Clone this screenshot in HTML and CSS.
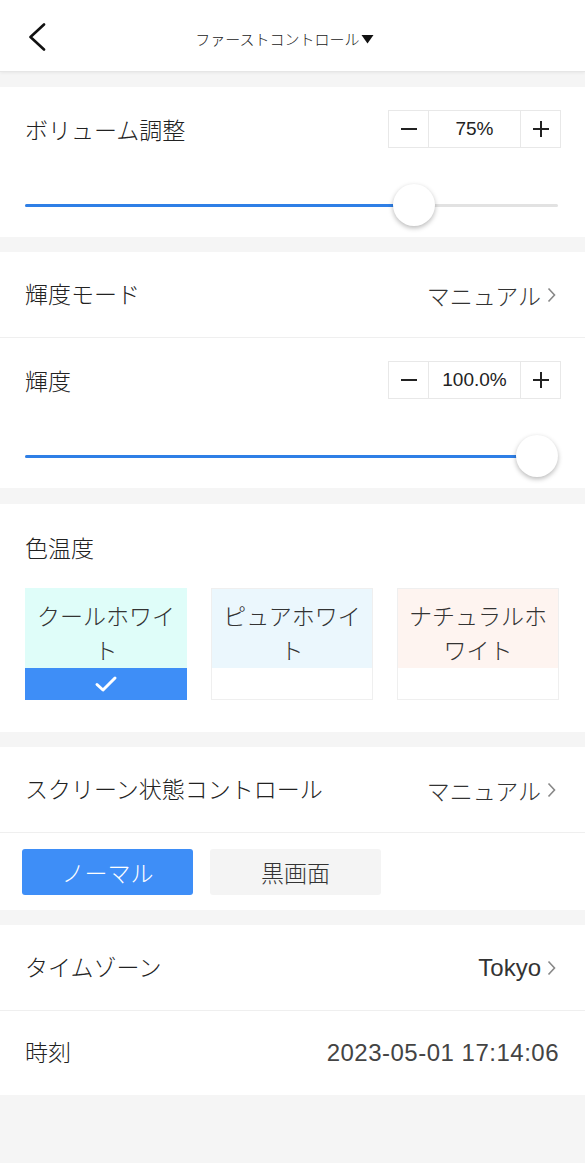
FILE: index.html
```html
<!DOCTYPE html>
<html lang="ja">
<head>
<meta charset="utf-8">
<title>ファーストコントロール</title>
<link rel="stylesheet" href="styles.css">
</head>
<body>
<header class="header">
  <div class="header-left">
    <svg class="back" width="20" height="28" viewBox="0 0 20 28"><path d="M17 1.5 L3.5 14 L17 26.5" fill="none" stroke="#111" stroke-width="2.6" stroke-linecap="round" stroke-linejoin="round"/></svg>
  </div>
  <div class="header-title">ファーストコントロール<svg class="caret" width="13" height="10" viewBox="0 0 13 10"><path d="M0.5 1 H12.5 L6.5 9.5 Z" fill="#111"/></svg></div>
  <div></div>
</header>

<section class="card-section">
  <div class="adjust">
    <div class="adjust-top">
      <span class="label">ボリューム調整</span>
      <div class="stepper">
        <span class="step-btn"><svg width="18" height="18" viewBox="0 0 18 18"><path d="M1 9 H17" stroke="#222" stroke-width="2"/></svg></span>
        <span class="step-val">75%</span>
        <span class="step-btn plus"><svg width="18" height="18" viewBox="0 0 18 18"><path d="M1 9 H17 M9 1 V17" stroke="#222" stroke-width="2"/></svg></span>
      </div>
    </div>
    <div class="slider">
      <div class="track"><div class="fill" style="width: calc(21px + 0.75 * (100% - 42px));"></div></div>
      <div class="thumb" style="left: calc(0.75 * (100% - 42px));"></div>
    </div>
  </div>
</section>

<section class="card-section">
  <div class="row">
    <span class="label">輝度モード</span>
    <span class="value">マニュアル<svg class="chev" width="9" height="16" viewBox="0 0 9 16"><path d="M1.5 1.5 L7.5 8 L1.5 14.5" fill="none" stroke="#888" stroke-width="1.6"/></svg></span>
  </div>
  <div class="divider"></div>
  <div class="adjust">
    <div class="adjust-top">
      <span class="label">輝度</span>
      <div class="stepper">
        <span class="step-btn"><svg width="18" height="18" viewBox="0 0 18 18"><path d="M1 9 H17" stroke="#222" stroke-width="2"/></svg></span>
        <span class="step-val">100.0%</span>
        <span class="step-btn plus"><svg width="18" height="18" viewBox="0 0 18 18"><path d="M1 9 H17 M9 1 V17" stroke="#222" stroke-width="2"/></svg></span>
      </div>
    </div>
    <div class="slider">
      <div class="track"><div class="fill" style="width: calc(21px + 1 * (100% - 42px));"></div></div>
      <div class="thumb" style="left: calc(1 * (100% - 42px));"></div>
    </div>
  </div>
</section>

<section class="card-section temp">
  <div class="temp-label label">色温度</div>
  <div class="temp-grid">
    <div class="temp-card selected">
      <div class="temp-name cool">クールホワイト</div>
      <div class="temp-foot"><svg width="24" height="18" viewBox="0 0 24 18"><path d="M3 9.5 L9 15 L21 3" fill="none" stroke="#fff" stroke-width="3" stroke-linecap="round" stroke-linejoin="round"/></svg></div>
    </div>
    <div class="temp-card">
      <div class="temp-name pure">ピュアホワイト</div>
      <div class="temp-foot"></div>
    </div>
    <div class="temp-card">
      <div class="temp-name natural">ナチュラルホワイト</div>
      <div class="temp-foot"></div>
    </div>
  </div>
</section>

<section class="card-section">
  <div class="row">
    <span class="label">スクリーン状態コントロール</span>
    <span class="value">マニュアル<svg class="chev" width="9" height="16" viewBox="0 0 9 16"><path d="M1.5 1.5 L7.5 8 L1.5 14.5" fill="none" stroke="#888" stroke-width="1.6"/></svg></span>
  </div>
  <div class="divider"></div>
  <div class="modes">
    <span class="mode active">ノーマル</span>
    <span class="mode">黒画面</span>
  </div>
</section>

<section class="card-section">
  <div class="row">
    <span class="label">タイムゾーン</span>
    <span class="value latin">Tokyo<svg class="chev" width="9" height="16" viewBox="0 0 9 16"><path d="M1.5 1.5 L7.5 8 L1.5 14.5" fill="none" stroke="#888" stroke-width="1.6"/></svg></span>
  </div>
  <div class="divider"></div>
  <div class="row time-row">
    <span class="label">時刻</span>
    <span class="value latin time">2023-05-01 17:14:06</span>
  </div>
</section>
</body>
</html>
```

FILE: styles.css
```css
* { box-sizing: border-box; }

body {
  margin: 0;
  background: #f5f5f5;
  font-family: "Liberation Sans", "Noto Sans CJK JP", sans-serif;
  font-weight: 300;
  color: #222;
}

.header {
  height: 72px;
  background: #fff;
  border-bottom: 1px solid #e6e6e6;
  box-shadow: 0 1px 3px rgba(0, 0, 0, 0.06);
  display: grid;
  grid-template-columns: 1fr auto 1fr;
  align-items: center;
}

.header-left {
  padding-left: 27px;
  display: flex;
  align-items: center;
  padding-top: 2px;
}

.header-title {
  font-size: 15px;
  color: #222;
  display: flex;
  align-items: center;
  gap: 1px;
  padding-top: 5px;
  padding-right: 16px;
}

.caret { margin-top: 1px; }

.card-section {
  background: #fff;
  margin-top: 15px;
}

.label {
  font-size: 23px;
  color: #222;
  line-height: 30px;
}

.adjust {
  padding: 23px 24px 11px 25px;
}

.adjust-top {
  display: flex;
  justify-content: space-between;
  align-items: center;
  height: 38px;
}

.adjust-top .label { padding-top: 3px; }

.stepper {
  display: flex;
  height: 38px;
  border: 1px solid #e8e8e8;
}

.step-btn {
  width: 39px;
  display: flex;
  align-items: center;
  justify-content: center;
}

.step-val {
  width: 93px;
  border-left: 1px solid #e8e8e8;
  border-right: 1px solid #e8e8e8;
  display: flex;
  align-items: center;
  justify-content: center;
  font-size: 19px;
  color: #222;
}

.slider {
  position: relative;
  height: 42px;
  margin-top: 36px;
  margin-right: 3px;
  display: flex;
  align-items: center;
}

.track {
  width: 100%;
  height: 3px;
  background: #e2e2e2;
  border-radius: 2px;
  overflow: hidden;
}

.fill {
  height: 100%;
  background: #2f7fe6;
}

.thumb {
  position: absolute;
  top: 0;
  width: 42px;
  height: 42px;
  border-radius: 50%;
  background: #fff;
  box-shadow: 0 2px 5px rgba(0, 0, 0, 0.28);
}

.row {
  height: 85px;
  padding: 0 29px 0 25px;
  display: flex;
  align-items: center;
  justify-content: space-between;
}

.time-row { height: 84px; padding-right: 26px; }

.value {
  font-size: 23px;
  color: #333;
  display: flex;
  align-items: center;
  gap: 6px;
}

.latin { font-size: 24px; }

.time {
  color: #444;
  letter-spacing: 0.5px;
}

.chev { margin-top: 1px; }

.divider {
  height: 1px;
  background: #efefef;
}

.temp {
  margin-top: 16px;
  padding: 30px 26px 32px 25px;
}

.temp-label { display: block; }

.temp-grid {
  margin-top: 24px;
  display: grid;
  grid-template-columns: repeat(3, 1fr);
  gap: 24px;
}

.temp-card {
  height: 112px;
  display: flex;
  flex-direction: column;
  border: 1px solid #efefef;
}

.temp-card.selected { border: none; }

.temp-name {
  height: 80px;
  padding: 12px 9px 0;
  font-size: 23px;
  line-height: 34px;
  text-align: center;
  color: #333;
  overflow: hidden;
}

.temp-card:not(.selected) .temp-name { height: 79px; padding-top: 11px; }

.cool { background: #dffdf9; }
.pure { background: #ebf7fd; }
.natural { background: #fef4f0; }

.temp-foot {
  flex: 1;
  background: #fff;
  display: flex;
  align-items: center;
  justify-content: center;
}

.selected .temp-foot { background: #3e8ef7; }

.modes {
  padding: 16px 22px 15px;
  display: flex;
  gap: 17px;
}

.mode {
  width: 171px;
  height: 46px;
  border-radius: 3px;
  background: #f4f4f4;
  color: #333;
  font-size: 23px;
  display: flex;
  align-items: center;
  justify-content: center;
}

.mode.active {
  background: #3e8ef7;
  color: #fff;
}
```
